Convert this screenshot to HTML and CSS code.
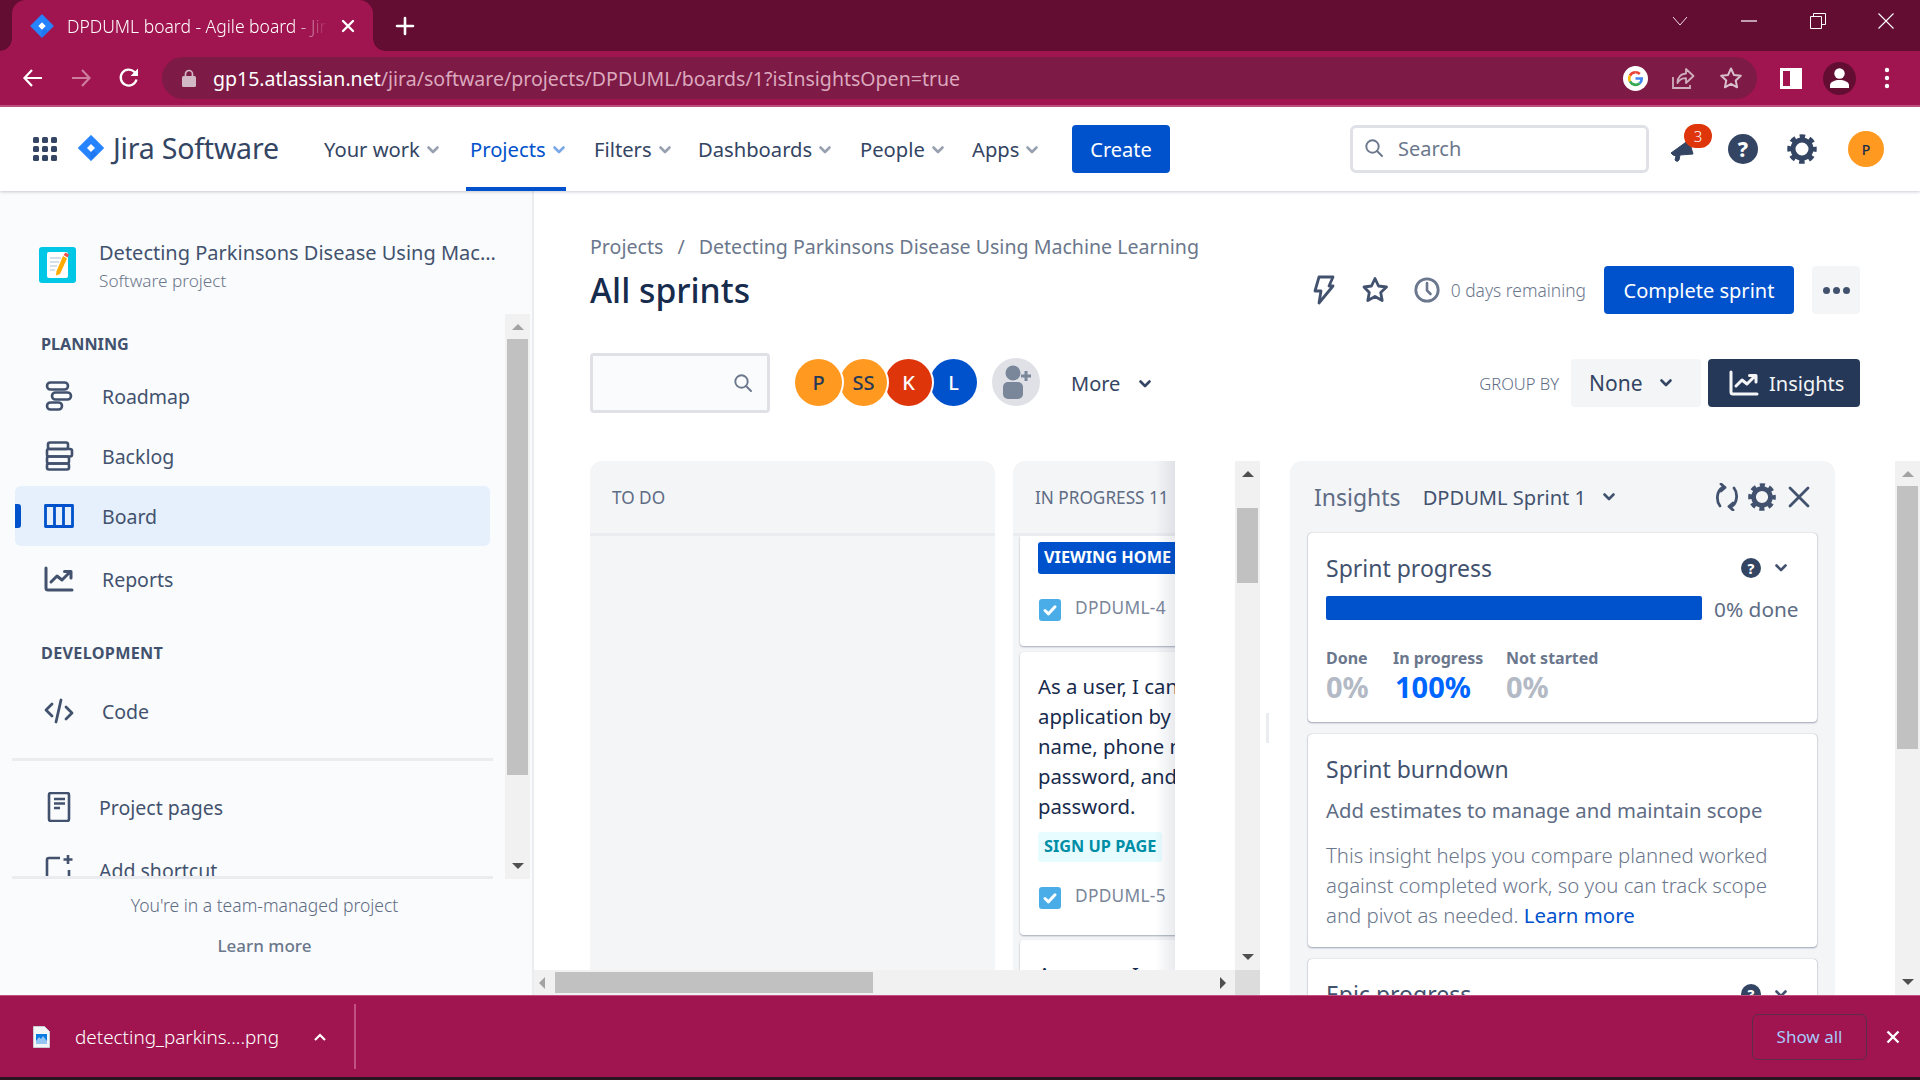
FILE: index.html
```html
<!DOCTYPE html>
<html lang="en">
<head>
<meta charset="utf-8">
<title>DPDUML board - Agile board - Jira</title>
<link rel="stylesheet" href="styles.css">
</head>
<body>
<svg class="defs" width="0" height="0" aria-hidden="true">
  <defs>
    <symbol id="i-jira" viewBox="0 0 24 24">
      <path d="M12 .6 23.4 12 12 23.4.6 12Z" fill="#2684ff" stroke="#2684ff" stroke-linejoin="round"/>
      <path d="M12 .6 18 6.7c-1.5.6-3.4 2-3.4 2.7L12 8c-1.5 1-2.4 2.500-1.700 5L12 16l-1 4 1 3.400 6-5.900-6-5.500 6-5.600z" fill="#1a6fe6" opacity=".55"/>
      <path d="M12 8.300 15.700 12 12 15.700 8.300 12Z" fill="#fff"/>
    </symbol>
    <symbol id="i-chev" viewBox="0 0 16 16"><path d="M3.500 5.500 8 10l4.500-4.500" fill="none" stroke="currentColor" stroke-width="2.600" stroke-linecap="round" stroke-linejoin="round"/></symbol>
    <symbol id="i-gear" viewBox="0 0 32 32">
      <circle cx="16" cy="16" r="9" fill="none" stroke="currentColor" stroke-width="5"/>
      <circle cx="16" cy="16" r="12.500" fill="none" stroke="currentColor" stroke-width="4.500" stroke-dasharray="5.400 4.420" stroke-dashoffset="2.700"/>
    </symbol>
    <symbol id="i-search" viewBox="0 0 20 20"><circle cx="8.500" cy="8.500" r="6.200" fill="none" stroke="currentColor" stroke-width="1.900"/><path d="m13 13 5 5" stroke="currentColor" stroke-width="2" stroke-linecap="round"/></symbol>
    <symbol id="i-story" viewBox="0 0 22 22"><rect width="22" height="22" rx="3" fill="#4bade8"/><path d="m6 11.500 3.500 3.300L16 7.800" fill="none" stroke="#fff" stroke-width="3" stroke-linecap="round" stroke-linejoin="round"/></symbol>
    <symbol id="i-chart" viewBox="0 0 30 26"><path d="M2 2v20q0 2 2 2h24" fill="none" stroke="currentColor" stroke-width="3" stroke-linecap="round"/><path d="m7 16 6-6 5 4 8-8M20.500 5.500H27V12" fill="none" stroke="currentColor" stroke-width="3" stroke-linecap="round" stroke-linejoin="round"/></symbol>
  </defs>
</svg>

<header class="tabstrip">
  <div class="tab">
    <svg class="tab-icon" width="24" height="24"><use href="#i-jira"/></svg>
    <span class="tab-title">DPDUML board - Agile board - Jira</span>
    <svg class="tab-close" width="14" height="14" viewBox="0 0 14 14"><path d="m2 2 10 10M12 2 2 12" stroke="#fff" stroke-width="2.400" stroke-linecap="round"/></svg>
  </div>
  <svg class="new-tab" width="20" height="20" viewBox="0 0 20 20"><path d="M10 2v16M2 10h16" stroke="#fff" stroke-width="2.600" stroke-linecap="round"/></svg>
  <div class="win-controls">
    <span class="win-btn"><svg width="16" height="10" viewBox="0 0 16 10"><path d="m1 1 7 8 7-8" fill="none" stroke="#f3dde7" stroke-width="1"/></svg></span>
    <span class="win-btn"><svg width="16" height="2" viewBox="0 0 16 2"><path d="M0 1h16" stroke="#fff" stroke-width="1.200"/></svg></span>
    <span class="win-btn"><svg width="16" height="16" viewBox="0 0 16 16"><path d="M.5 3.500h11v12H.5zM3.500 3.500V.5h12v11h-4" fill="none" stroke="#fff" stroke-width="1"/></svg></span>
    <span class="win-btn win-btn-last"><svg width="16" height="16" viewBox="0 0 16 16"><path d="m.5.5 15 15M15.500.5l-15 15" stroke="#fff" stroke-width="1.100"/></svg></span>
  </div>
</header>

<div class="toolbar">
  <span class="tb-btn"><svg width="22" height="20" viewBox="0 0 22 20"><path d="M20 10H3M10 2 2.500 10l7.500 8" fill="none" stroke="#fff" stroke-width="2.200"/></svg></span>
  <span class="tb-btn"><svg width="22" height="20" viewBox="0 0 22 20"><path d="M2 10h17M12 2l7.500 8-7.500 8" fill="none" stroke="#cd7c9e" stroke-width="2.200"/></svg></span>
  <span class="tb-btn"><svg width="22" height="22" viewBox="0 0 22 22"><path d="M18.500 12.500A8 8 0 1 1 16.500 5L19 7.500" fill="none" stroke="#fff" stroke-width="2.300"/><path d="M20 1.500V9h-7.500z" fill="#fff"/></svg></span>
  <div class="omnibox">
    <svg class="lock" width="14" height="18" viewBox="0 0 14 18"><path d="M3.500 8V5a3.500 3.500 0 0 1 7 0v3" fill="none" stroke="#d2b7c4" stroke-width="1.700"/><rect y="7" width="14" height="11" rx="1.500" fill="#d2b7c4"/></svg>
    <span class="url"><span class="url-host">gp15.atlassian.net</span>/jira/software/projects/DPDUML/boards/1?isInsightsOpen=true</span>
    <div class="omni-icons">
      <span class="tb-btn"><svg width="25" height="25" viewBox="0 0 24 24"><circle cx="12" cy="12" r="12" fill="#fff"/><path d="M12 6a6 6 0 0 0-5.300 3.200" fill="none" stroke="#ea4335" stroke-width="2.600"/><path d="M6.700 9.200a6 6 0 0 0 0 5.600" fill="none" stroke="#fbbc05" stroke-width="2.600"/><path d="M6.700 14.800A6 6 0 0 0 16 16.500" fill="none" stroke="#34a853" stroke-width="2.600"/><path d="M16 16.500a6 6 0 0 0 2-4.500h-6" fill="none" stroke="#4285f4" stroke-width="2.600"/><path d="M12 6a6 6 0 0 1 4.100 1.600" fill="none" stroke="#ea4335" stroke-width="2.600"/></svg></span>
      <span class="tb-btn"><svg width="24" height="24" viewBox="0 0 24 24"><path d="M2 11v11h17v-3" fill="none" stroke="#cfaebd" stroke-width="1.800"/><path d="M15 3v4.500C9 8 6.500 12 6.500 17c2-3.500 4.500-4.800 8.500-4.800V17l7.500-7z" fill="none" stroke="#cfaebd" stroke-width="1.800" stroke-linejoin="round"/></svg></span>
      <span class="tb-btn"><svg width="24" height="24" viewBox="0 0 24 24"><path d="m12 2.500 2.900 6.400 6.900.8-5.100 4.700 1.400 6.900-6.100-3.500-6.100 3.500 1.400-6.900-5.100-4.700 6.900-.8z" fill="none" stroke="#d9c0cc" stroke-width="2" stroke-linejoin="round"/></svg></span>
    </div>
  </div>
  <div class="tb-right">
    <span class="tb-btn"><svg width="22" height="21" viewBox="0 0 22 21"><path fill-rule="evenodd" d="M0 0h22v21H0zM3 3v15h7V3z" fill="#fff"/></svg></span>
    <span class="tb-btn"><span class="profile"><svg width="21" height="20" viewBox="0 0 21 20"><circle cx="10.500" cy="5.500" r="5.200" fill="#fff"/><path d="M1 20v-3c0-3 5-5 9.500-5s9.500 2 9.500 5v3z" fill="#fff"/></svg></span></span>
    <span class="tb-btn"><svg width="6" height="22" viewBox="0 0 6 22"><circle cx="3" cy="3" r="2.200" fill="#fff"/><circle cx="3" cy="11" r="2.200" fill="#fff"/><circle cx="3" cy="19" r="2.200" fill="#fff"/></svg></span>
  </div>
</div>

<nav class="topnav">
  <svg class="apps" width="24" height="24" viewBox="0 0 24 24">
    <g fill="#344563"><rect width="6" height="6" rx="1.500"/><rect x="9" width="6" height="6" rx="1.500"/><rect x="18" width="6" height="6" rx="1.500"/><rect y="9" width="6" height="6" rx="1.500"/><rect x="9" y="9" width="6" height="6" rx="1.500"/><rect x="18" y="9" width="6" height="6" rx="1.500"/><rect y="18" width="6" height="6" rx="1.500"/><rect x="9" y="18" width="6" height="6" rx="1.500"/><rect x="18" y="18" width="6" height="6" rx="1.500"/></g>
  </svg>
  <svg class="jira-logo" width="26" height="28"><use href="#i-jira"/></svg>
  <span class="jira-word">Jira Software</span>
  <div class="nav-menu">
    <a class="nav-item">Your work<svg class="nav-caret" width="16" height="16"><use href="#i-chev"/></svg></a>
    <a class="nav-item nav-item-on">Projects<svg class="nav-caret" width="16" height="16"><use href="#i-chev"/></svg></a>
    <a class="nav-item">Filters<svg class="nav-caret" width="16" height="16"><use href="#i-chev"/></svg></a>
    <a class="nav-item">Dashboards<svg class="nav-caret" width="16" height="16"><use href="#i-chev"/></svg></a>
    <a class="nav-item">People<svg class="nav-caret" width="16" height="16"><use href="#i-chev"/></svg></a>
    <a class="nav-item">Apps<svg class="nav-caret" width="16" height="16"><use href="#i-chev"/></svg></a>
    <span class="create-btn">Create</span>
  </div>
  <div class="nav-right">
    <div class="global-search"><svg width="20" height="20" class="gs-icon"><use href="#i-search"/></svg><span>Search</span></div>
    <span class="bell">
      <svg width="30" height="30" viewBox="0 0 30 30"><path d="M3 19 21 6l4 14-13 1-1 5q-1 2-3 1l-1-1 1-4-3-1z" fill="#344563" stroke="#344563" stroke-linejoin="round"/></svg>
      <span class="badge">3</span>
    </span>
    <span class="help help-lg">?</span>
    <svg class="nav-gear" width="32" height="32"><use href="#i-gear"/></svg>
    <span class="avatar-sm">P</span>
  </div>
</nav>

<div class="workspace">
  <aside class="sidebar">
    <div class="project">
      <svg class="project-icon" width="37" height="36" viewBox="0 0 37 36"><rect width="37" height="36" rx="3" fill="#00c7e6"/><rect x="8" y="5" width="21" height="26" rx="2" fill="#fff"/><path d="M11 11h11M11 15h9M11 19h7M11 23h5" stroke="#c9d6e2" stroke-width="1.500"/><path d="m24 9 4 2.500L21 27l-4 1.500.4-4z" fill="#ffab00"/><path d="m24.500 8 4 2.500 1.500-3-3.500-2z" fill="#ef5350"/></svg>
      <div class="project-text">
        <div class="project-name">Detecting Parkinsons Disease Using Mac...</div>
        <div class="project-type">Software project</div>
      </div>
    </div>
    <div class="side-scroll">
      <div class="side-list">
        <div class="side-label">PLANNING</div>
        <a class="side-row"><svg class="side-icon" width="30" height="30" viewBox="0 0 30 30"><g fill="none" stroke="#42526e" stroke-width="2.600"><rect x="3" y="1.500" width="21" height="7" rx="3.500"/><rect x="8" y="11.500" width="19" height="7" rx="3.500"/><rect x="3" y="21.500" width="15" height="7" rx="3.500"/></g></svg><span>Roadmap</span></a>
        <a class="side-row"><svg class="side-icon" width="30" height="30" viewBox="0 0 30 30"><g fill="none" stroke="#42526e" stroke-width="2.600" stroke-linejoin="round"><rect x="4" y="1.500" width="20" height="6.500" rx="2"/><rect x="3" y="8" width="25" height="7.500" rx="2"/><rect x="3" y="15.500" width="22" height="7" rx="2"/><rect x="3" y="22.500" width="22" height="6" rx="2"/></g></svg><span>Backlog</span></a>
        <a class="side-row side-row-on"><svg class="side-icon" width="30" height="24" viewBox="0 0 30 24"><path d="M1.500 1.500h27v21h-27zM10.500 1.500v21M19.500 1.500v21" fill="none" stroke="#0052cc" stroke-width="2.800" stroke-linejoin="round"/></svg><span>Board</span></a>
        <a class="side-row side-row-reports"><svg class="side-icon side-icon-chart" width="30" height="26" viewBox="0 0 30 26"><use href="#i-chart"/></svg><span>Reports</span></a>
        <div class="side-label side-label-dev">DEVELOPMENT</div>
        <a class="side-row side-row-code"><svg class="side-icon" width="30" height="26" viewBox="0 0 30 26"><path d="M8 6 2 12l6 6M22 9l6 6-6 6M17 2l-5 22" fill="none" stroke="#42526e" stroke-width="2.800" stroke-linecap="round" stroke-linejoin="round"/></svg><span>Code</span></a>
        <div class="side-divider"></div>
        <a class="side-row side-row-pages"><svg class="side-icon" width="30" height="30" viewBox="0 0 30 30"><rect x="5" y="1" width="20" height="28" rx="2" fill="none" stroke="#42526e" stroke-width="2.600"/><path d="M10 7h11M10 11.500h11M10 16h6" stroke="#42526e" stroke-width="2.400"/></svg><span>Project pages</span></a>
        <a class="side-row side-row-add"><svg class="side-icon" width="30" height="30" viewBox="0 0 30 30"><path d="M16 3H5q-2 0-2 2v22M25 15v14" fill="none" stroke="#42526e" stroke-width="2.600"/><path d="M24 0v9M19.500 4.500h9" stroke="#42526e" stroke-width="2.600"/></svg><span>Add shortcut</span></a>
      </div>
      <div class="vbar vbar-side">
        <span class="arrow-up"></span>
        <span class="vbar-thumb"></span>
        <span class="arrow-down"></span>
      </div>
    </div>
    <div class="side-foot">
      <div class="foot-note">You're in a team-managed project</div>
      <div class="foot-link">Learn more</div>
    </div>
  </aside>

  <main class="main">
    <div class="crumbs"><span>Projects</span><span class="crumb-sep">/</span><span>Detecting Parkinsons Disease Using Machine Learning</span></div>
    <div class="title-row">
      <h1 class="page-title">All sprints</h1>
      <div class="actions">
        <svg class="act-icon" width="24" height="32" viewBox="0 0 24 32"><path d="M7 3h14l-4 9h4L7 29l2-12H3z" fill="none" stroke="#42526e" stroke-width="2.800" stroke-linejoin="round"/></svg>
        <svg class="act-star" width="28" height="28" viewBox="0 0 28 28"><path d="m14 2.500 3.500 7.500 8 1-5.800 5.500 1.500 8-7.200-4-7.200 4 1.500-8L3 11l7.500-1z" fill="none" stroke="#42526e" stroke-width="2.800" stroke-linejoin="round"/></svg>
        <svg class="act-clock" width="26" height="26" viewBox="0 0 26 26"><circle cx="13" cy="13" r="11.200" fill="none" stroke="#6b778c" stroke-width="2.800"/><path d="M13 6v7.500l3.500 3.500" fill="none" stroke="#6b778c" stroke-width="2.600" stroke-linecap="round"/></svg>
        <span class="remaining">0 days remaining</span>
        <span class="btn-primary">Complete sprint</span>
        <span class="btn-dots"><i></i><i></i><i></i></span>
      </div>
    </div>
    <div class="filter-row">
      <div class="board-search"><svg width="20" height="20"><use href="#i-search"/></svg></div>
      <div class="avatars">
        <span class="av av-orange av-1">P</span>
        <span class="av av-orange av-2">SS</span>
        <span class="av av-red av-3">K</span>
        <span class="av av-blue av-4">L</span>
      </div>
      <span class="add-person"><svg width="32" height="36" viewBox="0 0 32 36"><circle cx="13" cy="9" r="7.500" fill="#7a869a"/><rect x="3" y="18" width="20" height="17" rx="5" fill="#7a869a"/><path d="M26 7v10M21 12h10" stroke="#7a869a" stroke-width="3"/></svg></span>
      <span class="more">More<svg width="16" height="16"><use href="#i-chev"/></svg></span>
      <div class="filter-right">
        <span class="group-label">GROUP BY</span>
        <span class="group-select">None<svg width="16" height="16"><use href="#i-chev"/></svg></span>
        <span class="btn-insights"><svg width="30" height="26"><use href="#i-chart"/></svg>Insights</span>
      </div>
    </div>

    <div class="board-row">
      <div class="board-scroll">
        <div class="board-view">
          <div class="columns">
            <section class="column">
              <div class="col-head">TO DO</div>
            </section>
            <section class="column">
              <div class="col-head">IN PROGRESS 11</div>
              <div class="col-body">
                <article class="issue issue-first">
                  <span class="tag tag-blue">VIEWING HOME PAGE</span>
                  <div class="issue-key"><svg width="22" height="22"><use href="#i-story"/></svg>DPDUML-4</div>
                </article>
                <article class="issue">
                  <p class="issue-text">As a user, I can register into the<br>application by entering my email,<br>name, phone number, username,<br>password, and confirm<br>password.</p>
                  <span class="tag tag-teal">SIGN UP PAGE</span>
                  <div class="issue-key"><svg width="22" height="22"><use href="#i-story"/></svg>DPDUML-5</div>
                </article>
                <article class="issue">
                  <p class="issue-text">As a user, I can log in</p>
                </article>
              </div>
            </section>
            <span class="col-fade"></span>
          </div>
          <div class="vbar vbar-board">
            <span class="arrow-up arrow-dark"></span>
            <span class="vbar-thumb"></span>
            <span class="arrow-down"></span>
          </div>
        </div>
        <div class="hbar">
          <span class="arrow-left"></span>
          <span class="hbar-thumb"></span>
          <span class="arrow-right"></span>
          <span class="hbar-corner"></span>
        </div>
      </div>
      <div class="resize-gap"><span class="resize-grip"></span></div>
      <aside class="insights">
        <div class="ins-head">
          <span class="ins-title">Insights</span>
          <span class="ins-sprint">DPDUML Sprint 1</span>
          <svg class="ins-chev" width="16" height="16"><use href="#i-chev"/></svg>
          <div class="ins-tools">
            <svg width="28" height="28" viewBox="0 0 28 28"><path d="M12 4.500H9.500C3.500 8 3 18 7 23M8 1l4 3.500L8 8M16 23.500h2.500C24.500 20 25 10 21 5M20 20l-4 3.500 4 3.500" fill="none" stroke="#42526e" stroke-width="2.800" stroke-linecap="round" stroke-linejoin="round"/></svg>
            <svg class="ins-gear" width="30" height="30"><use href="#i-gear"/></svg>
            <svg width="24" height="24" viewBox="0 0 24 24"><path d="m3 3 18 18M21 3 3 21" stroke="#42526e" stroke-width="2.800" stroke-linecap="round"/></svg>
          </div>
        </div>
        <div class="ins-card ins-card-progress">
          <div class="card-head"><h2 class="card-title">Sprint progress</h2><span class="help help-sm">?</span><svg class="card-chev" width="16" height="16"><use href="#i-chev"/></svg></div>
          <div class="progress-row"><div class="progress-bar"></div><span class="progress-label">0% done</span></div>
          <div class="stats">
            <div class="stat stat-done"><div class="stat-label">Done</div><div class="stat-value">0%</div></div>
            <div class="stat stat-prog"><div class="stat-label">In progress</div><div class="stat-value stat-value-on">100%</div></div>
            <div class="stat"><div class="stat-label">Not started</div><div class="stat-value">0%</div></div>
          </div>
        </div>
        <div class="ins-card ins-card-burn">
          <h2 class="card-title">Sprint burndown</h2>
          <p class="burn-sub">Add estimates to manage and maintain scope</p>
          <p class="burn-text">This insight helps you compare planned worked<br>against completed work, so you can track scope<br>and pivot as needed. <a class="link">Learn more</a></p>
        </div>
        <div class="ins-card">
          <div class="card-head"><h2 class="card-title">Epic progress</h2><span class="help help-sm">?</span><svg class="card-chev" width="16" height="16"><use href="#i-chev"/></svg></div>
        </div>
      </aside>
      <div class="vbar vbar-page">
        <span class="arrow-up"></span>
        <span class="vbar-thumb"></span>
        <span class="arrow-down"></span>
      </div>
    </div>
  </main>
</div>

<footer class="downloads">
  <svg class="file-icon" width="17" height="22" viewBox="0 0 17 22"><path d="M.5.500h11l5 5v16H.5z" fill="#f4f5f7" stroke="#c9cdd4"/><rect x="3" y="8" width="11" height="10" fill="#0a7be0"/><path d="m3 15 3-4 2 2 2-3 4 5v3H3z" fill="#cfe6fb" opacity=".7"/></svg>
  <span class="file-name">detecting_parkins....png</span>
  <svg class="file-caret" width="14" height="10" viewBox="0 0 14 10"><path d="m2 8 5-5 5 5" fill="none" stroke="#fff" stroke-width="2.200"/></svg>
  <span class="dl-sep"></span>
  <span class="show-all">Show all</span>
  <svg class="dl-close" width="14" height="14" viewBox="0 0 14 14"><path d="m1.500 1.500 11 11M12.500 1.500l-11 11" stroke="#fff" stroke-width="2.400"/></svg>
</footer>
</body>
</html>
```

FILE: styles.css
```css
* { box-sizing: border-box; }
html, body { margin: 0; height: 100%; }
body {
  width: 1920px;
  height: 1080px;
  overflow: hidden;
  display: flex;
  flex-direction: column;
  font-family: "Noto Sans", "Open Sans", sans-serif;
  color: #42526e;
  background: #fff;
}
.defs { position: absolute; }
svg { display: block; flex: none; }

/* browser chrome */
.tabstrip { height: 51px; flex: none; background: #640d33; display: flex; padding-left: 12px; }
.tab {
  width: 361px; height: 51px; background: #a0154f; border-radius: 14px 14px 0 0;
  display: flex; align-items: center; padding-left: 18px; position: relative; color: #fff;
}
.tab::before, .tab::after { content: ""; position: absolute; bottom: 0; width: 12px; height: 12px; }
.tab::before { left: -12px; background: radial-gradient(circle at 0 0, #640d33 11.500px, #a0154f 12px); }
.tab::after { right: -12px; background: radial-gradient(circle at 100% 0, #640d33 11.500px, #a0154f 12px); }
.tab-title {
  margin-left: 13px; width: 261px; overflow: hidden; white-space: nowrap; font-size: 17.500px; font-weight: 300;
  -webkit-mask-image: linear-gradient(90deg, #000 86%, transparent);
  mask-image: linear-gradient(90deg, #000 86%, transparent);
}
.tab-close { margin-left: 13px; }
.new-tab { margin: 16px 0 0 22px; }
.win-controls { margin-left: auto; display: flex; }
.win-btn { width: 69px; height: 42px; display: flex; align-items: center; justify-content: center; }
.win-btn-last { width: 68px; }

.toolbar {
  height: 56px; flex: none; background: #a0154f; border-bottom: 2px solid #c2517f;
  display: flex; align-items: center; padding-left: 9px;
}
.tb-btn { width: 48px; height: 42px; display: flex; align-items: center; justify-content: center; }
.omnibox {
  margin-left: 9px; width: 1595px; height: 42px; border-radius: 21px; background: #7d1a45;
  display: flex; align-items: center; padding: 0 2px 0 20px;
}
.url { margin-left: 17px; font-size: 19.550px; color: #dba8be; white-space: nowrap; }
.url-host { color: #fff; }
.omni-icons { margin-left: auto; display: flex; }
.tb-right { margin-left: 10px; display: flex; }
.profile { width: 33px; height: 33px; border-radius: 50%; background: #640d33; display: flex; align-items: center; justify-content: center; }

/* jira top nav */
.topnav {
  height: 84px; flex: none; background: #fff; display: flex; align-items: center; padding-left: 33px;
  box-shadow: 0 1px 3px rgba(9, 30, 66, .22); position: relative; z-index: 2;
}
.jira-logo { margin-left: 21px; margin-top: -3px; }
.jira-word { margin-left: 9px; width: 211px; font-size: 28.500px; color: #344563; margin-top: -3px; letter-spacing: -.2px; white-space: nowrap; }
.nav-menu { display: grid; grid-template-columns: 146px 124px 104px 162px 112px 100px 98px; height: 84px; align-items: center; }
.nav-item { font-size: 20.200px; color: #344563; display: flex; align-items: center; gap: 5px; height: 84px; position: relative; }
.nav-caret { color: #97a0af; margin-top: 1px; }
.nav-item-on { color: #0052cc; }
.nav-item-on .nav-caret { color: #7aa7e6; }
.nav-item-on::after { content: ""; position: absolute; left: -4px; width: 100px; bottom: 0; height: 4px; background: #0052cc; }
.create-btn { height: 48px; background: #0052cc; color: #fff; font-size: 20px; border-radius: 4px; display: flex; align-items: center; justify-content: center; }
.nav-right { margin-left: auto; display: flex; align-items: center; padding-right: 36px; }
.global-search {
  width: 299px; height: 48px; border: 3px solid #dfe1e6; border-radius: 6px; display: flex; align-items: center;
  padding: 0 0 2px 11px; gap: 14px; font-size: 20px; color: #6b778c; margin-right: 19px;
}
.gs-icon { color: #6b778c; }
.bell { width: 40px; height: 48px; position: relative; display: flex; align-items: center; margin-right: 20px; }
.badge {
  position: absolute; top: -1px; left: 16px; width: 28px; height: 24px; border-radius: 12px; background: #de350b;
  color: #fff; font-size: 15px; font-weight: 300; display: flex; align-items: center; justify-content: center;
}
.help { background: #344563; color: #fff; border-radius: 50%; display: flex; align-items: center; justify-content: center; font-weight: 800; }
.help-lg { width: 30px; height: 30px; font-size: 21px; margin-right: 28px; }
.help-sm { width: 20px; height: 20px; font-size: 14px; }
.nav-gear { color: #344563; margin-right: 30px; }
.avatar-sm { width: 36px; height: 36px; border-radius: 50%; background: #ff991f; color: #172b4d; font-size: 14px; font-weight: 500; display: flex; align-items: center; justify-content: center; }

/* workspace */
.workspace { flex: 1; display: flex; min-height: 0; overflow: hidden; }
.sidebar { width: 534px; flex: none; background: #fafbfc; border-right: 2px solid #ebecf0; display: flex; flex-direction: column; }
.project { height: 123px; flex: none; display: flex; padding: 48px 0 0 39px; align-items: flex-start; }
.project-icon { margin-top: 8px; }
.project-text { margin-left: 23px; }
.project-name { font-size: 20px; line-height: 28px; color: #42526e; white-space: nowrap; width: 400px; }
.project-type { font-size: 17.200px; line-height: 24px; margin-top: 2px; color: #6b778c; font-weight: 300; }

.side-scroll { height: 565px; flex: none; display: flex; }
.side-list { width: 481px; margin-left: 12px; margin-right: 12px; height: 565px; overflow: hidden; border-bottom: 3px solid #ebecf0; }
.side-label { margin: 20px 0 0 29px; font-size: 16.200px; line-height: 20px; font-weight: 700; color: #42526e; }
.side-label-dev { margin-top: 34px; letter-spacing: .3px; }
.side-row { height: 60px; margin-left: 3px; width: 475px; display: flex; align-items: center; padding-left: 29px; gap: 28px; font-size: 19.500px; color: #42526e; border-radius: 6px; position: relative; }
.side-label + .side-row { margin-top: 12px; }
.side-row-on { background: #e6effc; }
.side-row-on::before { content: ""; position: absolute; left: 0; top: 18px; width: 6px; height: 24px; background: #0052cc; border-radius: 0 3px 3px 0; }
.side-row-reports { margin-top: 3px; }
.side-icon-chart { color: #42526e; }
.side-label + .side-row-code { margin-top: 18px; }
.side-row-pages { margin-top: 16px; gap: 25px; }
.side-row-add { margin-top: 3px; gap: 25px; }
.side-divider { height: 3px; margin-top: 17px; background: #ebecf0; }
.side-foot { flex: 1; text-align: center; padding: 14px 3px 0 0; }
.foot-note { font-size: 17.500px; line-height: 24px; color: #5e6c84; font-weight: 300; }
.foot-link { margin-top: 17px; font-size: 17px; line-height: 24px; color: #6b778c; font-weight: 500; }

/* scrollbars */
.vbar { flex: none; width: 25px; background: #f1f1f1; display: flex; flex-direction: column; align-items: center; padding: 0 2px; position: relative; }
.vbar-thumb { position: absolute; left: 2px; right: 2px; background: #c1c1c1; }
.vbar-side .vbar-thumb { top: 25px; height: 436px; }
.vbar-board .vbar-thumb { top: 47px; height: 75px; }
.vbar-page .vbar-thumb { top: 25px; height: 263px; }
.arrow-up, .arrow-down, .arrow-left, .arrow-right { position: absolute; width: 0; height: 0; border-style: solid; border-color: transparent; }
.arrow-up { top: 10px; border-width: 0 6px 6px; border-bottom-color: #a3a3a3; }
.arrow-dark { border-bottom-color: #505050; }
.arrow-down { bottom: 10px; border-width: 6px 6px 0; border-top-color: #505050; }
.arrow-left { left: 5px; top: 7px; border-width: 6px 6px 6px 0; border-right-color: #a3a3a3; }
.arrow-right { right: 34px; top: 7px; border-width: 6px 0 6px 6px; border-left-color: #505050; }

/* main */
.main { flex: 1; min-width: 0; padding-top: 41px; display: flex; flex-direction: column; }
.crumbs { height: 28px; margin-left: 56px; display: flex; align-items: center; font-size: 19.600px; color: #6b778c; }
.crumb-sep { margin: 0 14px; }
.title-row { height: 48px; margin: 6px 60px 0 56px; display: flex; align-items: center; justify-content: space-between; }
.page-title { margin: 0; font-size: 33.700px; line-height: 48px; font-weight: 500; color: #172b4d; }
.actions { display: flex; align-items: center; }
.act-star { margin-left: 25px; }
.act-clock { margin-left: 25px; }
.remaining { margin-left: 11px; font-size: 17.400px; font-weight: 300; color: #6b778c; }
.btn-primary { margin-left: 18px; width: 190px; height: 48px; background: #0052cc; color: #fff; border-radius: 4px; font-size: 20px; padding-top: 1px; display: flex; align-items: center; justify-content: center; }
.btn-dots { margin-left: 18px; width: 48px; height: 48px; background: #f4f5f7; border-radius: 4px; display: flex; align-items: center; justify-content: center; gap: 3px; }
.btn-dots i { width: 7px; height: 7px; border-radius: 50%; background: #42526e; }

.filter-row { height: 60px; margin: 39px 60px 0 56px; display: flex; align-items: center; }
.board-search { width: 180px; height: 60px; border: 3px solid #dfe1e6; border-radius: 4px; background: #fafbfc; display: flex; align-items: center; justify-content: flex-end; padding-right: 14px; color: #6b778c; margin-right: 25px; }
.avatars { display: flex; margin-top: -2px; }
.av { width: 47px; height: 47px; border-radius: 50%; display: flex; align-items: center; justify-content: center; font-size: 20px; font-weight: 500; margin-right: -2px; box-shadow: 0 0 0 2px #fff; position: relative; }
.av-1 { z-index: 4; } .av-2 { z-index: 3; } .av-3 { z-index: 2; } .av-4 { z-index: 1; }
.av-orange { background: #ff991f; color: #253858; }
.av-red { background: #de350b; color: #fff; }
.av-blue { background: #0052cc; color: #fff; }
.add-person { margin: -2px 0 0 17px; width: 48px; height: 48px; border-radius: 50%; background: #dfe1e6; display: flex; align-items: center; justify-content: center; }
.more { margin-left: 31px; display: flex; align-items: center; gap: 17px; font-size: 20px; color: #344563; padding-top: 1px; }
.filter-right { margin-left: auto; display: flex; align-items: center; }
.group-label { font-size: 16.500px; font-weight: 300; color: #5e6c84; margin-right: 12px; }
.group-select { width: 130px; height: 48px; background: #f4f5f7; border-radius: 4px; display: flex; align-items: center; padding-left: 18px; gap: 15px; font-size: 21px; color: #344563; }
.btn-insights { margin-left: 7px; width: 152px; height: 48px; background: #253858; color: #f4f5f7; border-radius: 4px; display: flex; align-items: center; gap: 10px; padding-left: 21px; font-size: 20px; }

.board-row { margin-top: 48px; flex: 1; min-height: 0; display: flex; }
.board-scroll { width: 726px; flex: none; display: flex; flex-direction: column; }
.board-view { flex: 1; min-height: 0; display: flex; }
.columns { margin-left: 56px; width: 585px; margin-right: 60px; flex: none; overflow: hidden; display: flex; gap: 18px; position: relative; }
.column { width: 405px; flex: none; background: #f4f5f7; border-radius: 12px 12px 0 0; display: flex; flex-direction: column; }
.col-head { height: 75px; flex: none; border-bottom: 3px solid #ebecf0; display: flex; align-items: center; padding-left: 22px; font-size: 17.200px; color: #5e6c84; }
.col-body { padding: 0 7px; flex: 1; min-height: 0; overflow: hidden; }
.issue { background: #fff; border-radius: 4px; box-shadow: 0 1px 2px rgba(9, 30, 66, .35); padding: 19px 18px 26px; margin-bottom: 5.500px; }
.issue-first { padding: 6px 18px 25px; border-radius: 0 0 4px 4px; }
.issue-text { margin: 0 0 11px; font-size: 20.300px; line-height: 30px; color: #172b4d; white-space: nowrap; }
.tag { display: inline-block; height: 32px; line-height: 31px; padding: 0 6px; border-radius: 3px; font-size: 16.300px; font-weight: 700; white-space: nowrap; vertical-align: top; }
.tag-blue { background: #0052cc; color: #fff; }
.tag-teal { height: 30px; line-height: 29px; background: #e6fcff; color: #008da6; }
.issue-key { margin-top: 25px; display: flex; align-items: flex-start; gap: 14px; padding-left: 1px; font-size: 17.300px; color: #7a869a; line-height: 18px; letter-spacing: .3px; }
.col-fade { position: absolute; right: 0; top: 0; bottom: 0; width: 20px; background: linear-gradient(90deg, rgba(9, 30, 66, 0), rgba(9, 30, 66, .09)); }

.hbar { height: 25px; flex: none; background: #f1f1f1; position: relative; }
.hbar-thumb { position: absolute; left: 21px; width: 318px; top: 2px; bottom: 2px; background: #c1c1c1; }
.hbar-corner { position: absolute; right: 0; top: 0; bottom: 0; width: 25px; background: #dcdcdc; }

.resize-gap { width: 30px; flex: none; display: flex; align-items: flex-start; justify-content: flex-start; }
.resize-grip { margin: 252px 0 0 6px; width: 3px; height: 30px; background: #ebecf0; }
.insights { width: 545px; flex: none; background: #f4f5f7; border-radius: 12px 12px 0 0; overflow: hidden; padding: 0 18px; }
.ins-head { height: 72px; display: flex; align-items: center; }
.ins-title { margin-left: 6px; font-size: 23px; color: #5e6c84; }
.ins-sprint { margin-left: 22px; font-size: 20.100px; color: #42526e; }
.ins-chev { margin-left: 15px; color: #42526e; }
.ins-tools { margin-left: auto; margin-right: 6px; display: flex; align-items: center; gap: 6px; }
.ins-gear { color: #42526e; margin-right: 4px; }
.ins-card { background: #fff; border-radius: 4px; box-shadow: 0 0 1px rgba(9, 30, 66, .4), 0 1px 2px rgba(9, 30, 66, .35); padding: 18px; margin-bottom: 12px; }
.ins-card-progress { height: 189px; }
.ins-card-burn { height: 213px; }
.card-head { display: flex; align-items: center; }
.card-title { margin: 0; font-size: 23px; line-height: 34px; font-weight: 400; color: #42526e; }
.card-head .help { margin-left: auto; margin-right: 12px; }
.card-chev { color: #42526e; margin-right: 10px; }
.progress-row { margin-top: 11px; display: flex; align-items: flex-start; }
.progress-bar { width: 376px; height: 24px; background: #0052cc; border-radius: 2px; flex: none; }
.progress-label { margin-left: 12px; font-size: 20.800px; line-height: 27px; color: #5e6c84; white-space: nowrap; }
.stats { margin-top: 23px; display: flex; }
.stat-done { width: 67px; }
.stat-prog { width: 113px; }
.stat-label { font-size: 16px; font-weight: 700; line-height: 24px; color: #6b778c; white-space: nowrap; }
.stat-value { margin-top: 0; font-size: 29px; line-height: 34px; font-weight: 700; color: #b3bac5; }
.stat-value-on { color: #0065ff; padding-left: 2px; }
.burn-sub { margin: 9px 0 0; font-size: 20.300px; line-height: 30px; color: #5e6c84; }
.burn-text { margin: 15px 0 0; font-size: 20.400px; line-height: 30px; color: #6b778c; font-weight: 300; white-space: nowrap; }
.link { color: #0052cc; font-weight: 400; }
.vbar-page { margin-left: auto; }

/* download shelf */
.downloads {
  height: 85px; flex: none; background: #a0154f; border-top: 1px solid #c2517f; border-bottom: 3px solid #2a1420;
  display: flex; align-items: center; padding: 0 20px 0 33px; color: #fff; position: relative; z-index: 3;
}
.file-name { margin-left: 25px; width: 203px; font-size: 18.900px; white-space: nowrap; font-weight: 300; }
.file-caret { margin-left: 35px; }
.dl-sep { margin-left: 27px; width: 2px; height: 65px; background: #c2517f; }
.show-all { margin-left: auto; width: 115px; height: 46px; border: 1px solid #5d2c4c; border-radius: 6px; color: #a8c7fa; font-size: 17px; display: flex; align-items: center; justify-content: center; }
.dl-close { margin-left: 19px; }
```
